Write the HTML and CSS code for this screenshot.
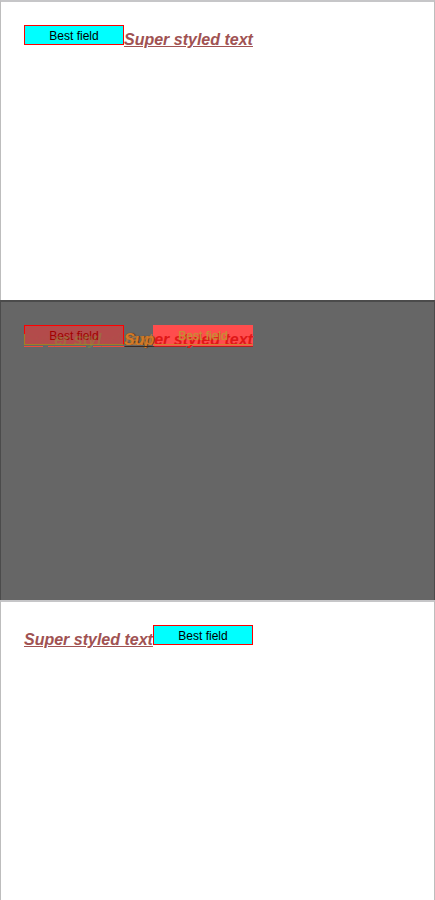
FILE: index.html
```
<!DOCTYPE html>
<html lang="en">
<head>
<meta charset="utf-8">
<title>Comparison</title>
<link rel="stylesheet" href="styles.css">
</head>
<body>
<section class="panel">
  <div class="row"><span class="field">Best field</span><span class="styled">Super styled text</span></div>
</section>
<section class="panel diff">
  <div class="row"><span class="field">Best field</span><span class="styled"><span class="over">Sup</span>er styled text</span></div>
  <div class="row ghost"><span class="styled">Sup<span class="cross">er styl</span>ed <span class="tail">text</span></span><span class="field">Best field</span></div>
</section>
<section class="panel">
  <div class="row"><span class="styled">Super styled text</span><span class="field">Best field</span></div>
</section>
</body>
</html>
```
FILE: styles.css
```
* { box-sizing: border-box; }
body { margin: 0; background: #fff; font-family: "Liberation Sans", Arial, sans-serif; }
.panel {
  position: relative;
  height: 300px;
  padding: 23px 23px 0;
  border: 1px solid #bdbdbd;
  border-top: 2px solid #c6c6c8;
  border-bottom: 0;
  overflow: hidden;
}
.row { display: flex; align-items: flex-start; height: 24px; }
.field {
  width: 100px;
  height: 20px;
  border: 1px solid #f00;
  background: #0ff;
  color: #000;
  font-size: 12px;
  line-height: 20px;
  text-align: center;
}
.styled {
  width: 129px;
  height: 22px;
  color: #a05252;
  font-size: 16px;
  font-style: italic;
  font-weight: bold;
  line-height: 18px;
  padding-top: 6px;
  text-decoration: underline;
  white-space: nowrap;
}
.diff { background: #666; border-color: #4b4b4b; }
.diff .field { background: #b34b4b; color: #a10000; border-bottom-color: #a08024; }
.diff .styled {
  color: #df1717;
  background: linear-gradient(#ff4d4d, #ff4d4d) 29px 0 / 100px 21px no-repeat;
  text-decoration-color: #b42020;
}
.diff .over {
  color: #d07828;
  text-decoration: underline #333;
  text-shadow: 1px 0 1px #4a3010;
}

/* Second layout laid over the first one, showing the pixels that moved. */
.diff .ghost { position: absolute; top: 23px; left: 23px; }
.diff .ghost .styled {
  color: rgba(142, 142, 56, 0.04);
  background: linear-gradient(#a08024, #a08024) 0 9px / 1px 11px no-repeat;
  text-decoration-color: #f04a3c;
}
.diff .ghost .cross { color: rgba(142, 142, 56, 0.45); }
.diff .ghost .tail {
  color: rgba(214, 124, 40, 0.65);
  text-decoration: underline #3a2a24;
}
.diff .ghost .field {
  background: none;
  border-color: transparent;
  border-bottom-color: #d08030;
  color: #c88d35;
  text-shadow: 0 0 1px #c88d35;
}
```
